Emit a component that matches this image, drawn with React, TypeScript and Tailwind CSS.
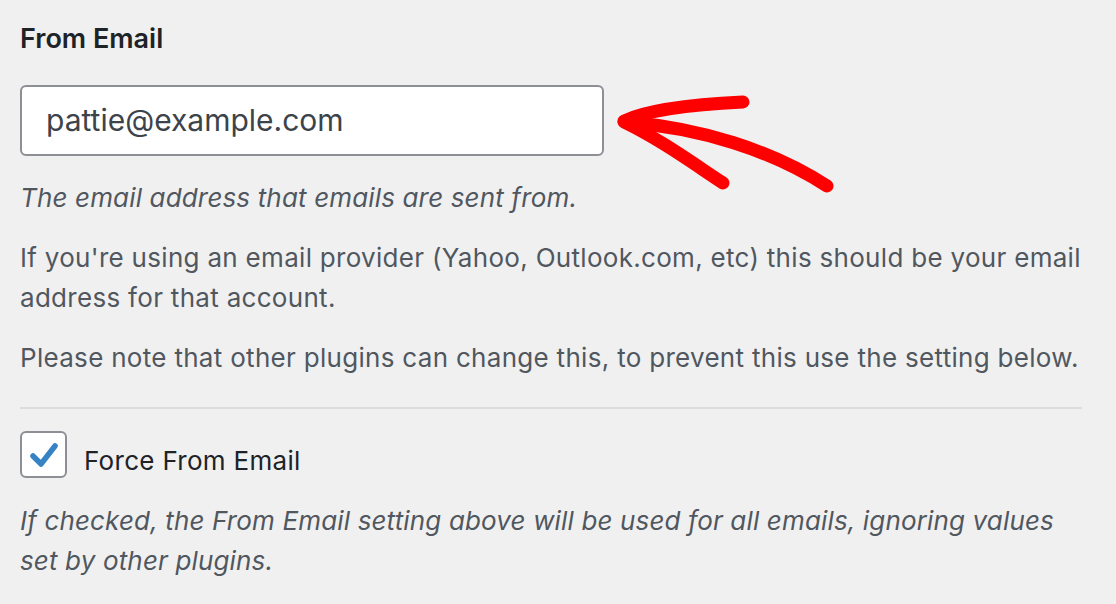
const font = { fontFamily: 'Inter, "Noto Sans", sans-serif' };

function Arrow() {
  return (
    <svg width="240" height="110" viewBox="600 85 240 110" className="shrink-0 -ml-[3px]">
      <g fill="none" stroke="#ff0000" strokeWidth="13" strokeLinecap="round" strokeLinejoin="round">
        <path d="M623 121 C 650 108, 700 104, 742 102" />
        <path d="M623 122 C 660 140, 690 162, 722 183" />
        <path d="M625 122 C 700 128, 770 150, 826 186" />
      </g>
    </svg>
  );
}

export default function App() {
  return (
    <div className="w-[1116px] h-[604px] bg-[#f0f0f1] overflow-hidden px-5 pt-[24px]" style={font}>
      <h3 className="text-[27px] leading-[30px] font-semibold text-[#1d2327]">From Email</h3>

      <div className="flex items-start mt-[31px] h-[71px]">
        <div className="w-[584px] h-[71px] bg-white border-2 border-[#8c8f94] rounded-[6px] flex items-center pl-[24px]">
          <span className="text-[30px] text-[#3c434a]">pattie@example.com</span>
        </div>
        <Arrow />
      </div>

      <p className="mt-[22px] text-[26px] leading-[40px] italic tracking-[0.15px] text-[#50575e]">
        The email address that emails are sent from.
      </p>
      <p className="mt-[20px] text-[26px] leading-[40px] tracking-[0.3px] text-[#50575e]">
        If you're using an email provider (Yahoo, Outlook.com, etc) this should be your email address for that account.
      </p>
      <p className="mt-[20px] text-[26px] leading-[40px] tracking-[0.3px] text-[#50575e]">
        Please note that other plugins can change this, to prevent this use the setting below.
      </p>

      <div className="mt-[29px] w-[1062px] h-[2px] bg-[#dcdcde]" />

      <label className="mt-[22px] flex items-start gap-[17px]">
        <span className="w-[47px] h-[47px] bg-white border-2 border-[#8c8f94] rounded-[6px] flex items-center justify-center">
          <svg width="32" height="32" viewBox="0 0 32 32">
            <path d="M5 17 L13 25 L27 7" fill="none" stroke="#3582c4" strokeWidth="5.5" strokeLinecap="round" strokeLinejoin="round" />
          </svg>
        </span>
        <span className="mt-[10px] text-[26px] leading-[40px] tracking-[0.3px] text-[#1d2327]">Force From Email</span>
      </label>

      <p className="mt-[20px] text-[26px] leading-[40px] italic tracking-[0.15px] text-[#50575e]">
        If checked, the From Email setting above will be used for all emails, ignoring values set by other plugins.
      </p>
    </div>
  );
}
